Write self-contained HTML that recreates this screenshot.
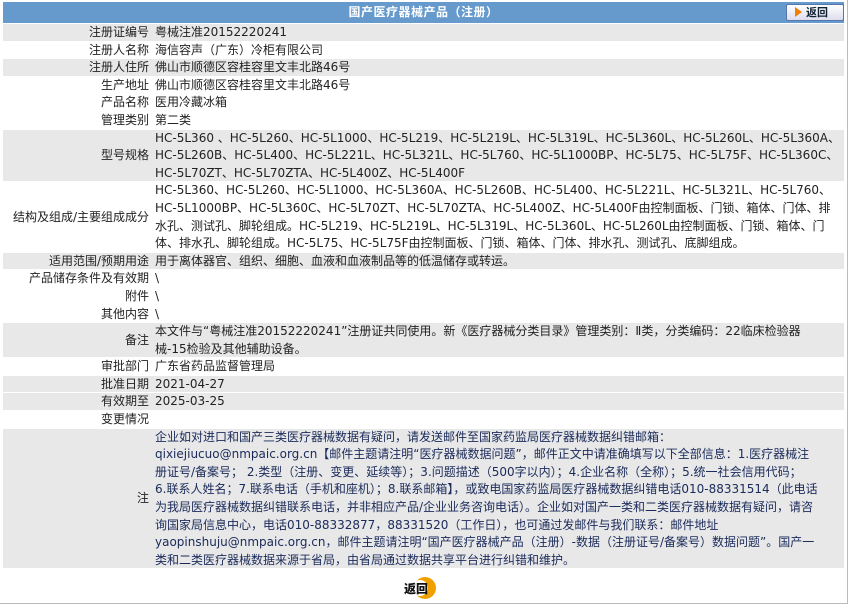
<!DOCTYPE html>
<html><head><meta charset="utf-8"><style>
body{margin:0;width:850px;height:608px;background:#fff;font-family:"DejaVu Sans","Noto Sans CJK SC",sans-serif;font-size:12px;color:#222;overflow:hidden;position:relative}
.frame{position:absolute;left:0;top:0;width:847px;height:603px;border-right:1px solid #bbb;border-bottom:1px solid #bbb}
.hd{position:absolute;left:3px;top:2px;width:841px;height:21px;background:#6699cc;color:#fff;font-weight:bold;text-align:center;line-height:21px;font-size:12px;letter-spacing:0.5px}
.btn{position:absolute;left:786px;top:4px;width:56px;height:15px;background:linear-gradient(#fff,#dde);border:1px solid #5577aa;border-radius:2px;color:#123;font-weight:bold;font-size:11px;line-height:15px;text-align:left}
.btn i{display:inline-block;margin:0 4px 0 8px;width:0;height:0;border-left:7px solid #f08000;border-top:5px solid transparent;border-bottom:5px solid transparent;vertical-align:-1px}
table{position:absolute;left:3px;top:24px;width:841px;border-collapse:collapse}
td{padding:0;line-height:17.6px;vertical-align:middle;box-shadow:inset 0 -1px #fff;white-space:nowrap}
td.l{width:146px;text-align:right;padding-right:6px}
td.v{padding-left:0}
tr.g td{background:#e8e8e8}
.n{color:#1a2a5a}
.back{position:absolute;left:404px;top:580px;font-weight:bold;font-size:12px;color:#111}
.back span{position:absolute;left:10px;top:-3px;width:22px;height:22px;border-radius:50%;background:#f0a000;z-index:-1}
.back span:after{content:"";position:absolute;left:-2px;top:3px;width:16px;height:16px;border-radius:50%;background:#fff}
.back b{position:relative}
</style></head><body>
<div class="frame"></div>
<div class="hd">国产医疗器械产品（注册）</div>
<div class="btn"><i></i>返回</div>
<table>
<tr class="g"><td class="l">注册证编号</td><td class="v">粤械注准20152220241</td></tr>
<tr><td class="l">注册人名称</td><td class="v">海信容声（广东）冷柜有限公司</td></tr>
<tr class="g"><td class="l">注册人住所</td><td class="v">佛山市顺德区容桂容里文丰北路46号</td></tr>
<tr><td class="l">生产地址</td><td class="v">佛山市顺德区容桂容里文丰北路46号</td></tr>
<tr><td class="l">产品名称</td><td class="v">医用冷藏冰箱</td></tr>
<tr><td class="l">管理类别</td><td class="v">第二类</td></tr>
<tr class="g"><td class="l">型号规格</td><td class="v">HC-5L360 、HC-5L260、HC-5L1000、HC-5L219、HC-5L219L、HC-5L319L、HC-5L360L、HC-5L260L、HC-5L360A、<br>HC-5L260B、HC-5L400、HC-5L221L、HC-5L321L、HC-5L760、HC-5L1000BP、HC-5L75、HC-5L75F、HC-5L360C、<br>HC-5L70ZT、HC-5L70ZTA、HC-5L400Z、HC-5L400F</td></tr>
<tr><td class="l">结构及组成/主要组成成分</td><td class="v">HC-5L360、HC-5L260、HC-5L1000、HC-5L360A、HC-5L260B、HC-5L400、HC-5L221L、HC-5L321L、HC-5L760、<br>HC-5L1000BP、HC-5L360C、HC-5L70ZT、HC-5L70ZTA、HC-5L400Z、HC-5L400F由控制面板、门锁、箱体、门体、排<br>水孔、测试孔、脚轮组成。HC-5L219、HC-5L219L、HC-5L319L、HC-5L360L、HC-5L260L由控制面板、门锁、箱体、门<br>体、排水孔、脚轮组成。HC-5L75、HC-5L75F由控制面板、门锁、箱体、门体、排水孔、测试孔、底脚组成。</td></tr>
<tr class="g"><td class="l">适用范围/预期用途</td><td class="v">用于离体器官、组织、细胞、血液和血液制品等的低温储存或转运。</td></tr>
<tr><td class="l">产品储存条件及有效期</td><td class="v">\</td></tr>
<tr><td class="l">附件</td><td class="v">\</td></tr>
<tr><td class="l">其他内容</td><td class="v">\</td></tr>
<tr class="g"><td class="l">备注</td><td class="v">本文件与“粤械注准20152220241”注册证共同使用。新《医疗器械分类目录》管理类别：Ⅱ类，分类编码：22临床检验器<br>械-15检验及其他辅助设备。</td></tr>
<tr><td class="l">审批部门</td><td class="v">广东省药品监督管理局</td></tr>
<tr class="g"><td class="l">批准日期</td><td class="v">2021-04-27</td></tr>
<tr class="g"><td class="l">有效期至</td><td class="v">2025-03-25</td></tr>
<tr><td class="l">变更情况</td><td class="v"></td></tr>
<tr class="g"><td class="l">注</td><td class="v n" style="padding-top:0">企业如对进口和国产三类医疗器械数据有疑问，请发送邮件至国家药监局医疗器械数据纠错邮箱：<br>qixiejiucuo@nmpaic.org.cn【邮件主题请注明“医疗器械数据问题”，邮件正文中请准确填写以下全部信息：1.医疗器械注<br>册证号/备案号； 2.类型（注册、变更、延续等）；3.问题描述（500字以内）；4.企业名称（全称）；5.统一社会信用代码；<br>6.联系人姓名；7.联系电话（手机和座机）；8.联系邮箱】，或致电国家药监局医疗器械数据纠错电话010-88331514（此电话<br>为我局医疗器械数据纠错联系电话，并非相应产品/企业业务咨询电话）。企业如对国产一类和二类医疗器械数据有疑问，请咨<br>询国家局信息中心，电话010-88332877，88331520（工作日），也可通过发邮件与我们联系：邮件地址<br>yaopinshuju@nmpaic.org.cn，邮件主题请注明“国产医疗器械产品（注册）-数据（注册证号/备案号）数据问题”。国产一<br>类和二类医疗器械数据来源于省局，由省局通过数据共享平台进行纠错和维护。</td></tr>
</table>
<div class="back"><span></span><b>返回</b></div>
</body></html>
